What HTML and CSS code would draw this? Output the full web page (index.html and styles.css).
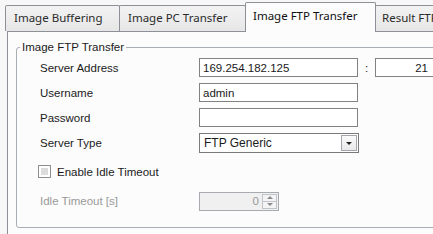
FILE: index.html
```html
<!DOCTYPE html>
<html lang="en">
<head>
  <meta charset="UTF-8">
  <title>Image FTP Transfer</title>
  <link rel="stylesheet" href="styles.css">
</head>
<body>
  <div class="window">
    <div class="tabs">
      <div class="tab tab-buffering">Image Buffering</div>
      <div class="tab tab-pc">Image PC Transfer</div>
      <div class="tab tab-ftp active">Image FTP Transfer</div>
      <div class="tab tab-result">Result FTP</div>
    </div>
    <div class="page">
      <fieldset class="group">
        <legend>Image FTP Transfer</legend>
        <!-- Server -->
        <div class="row">
          <span class="label">Server Address</span>
          <div class="field">169.254.182.125</div>
          <span class="colon">:</span>
          <div class="field port">21</div>
        </div>
        <div class="row">
          <span class="label">Username</span>
          <div class="field">admin</div>
        </div>
        <div class="row">
          <span class="label">Password</span>
          <div class="field"></div>
        </div>
        <div class="row">
          <span class="label">Server Type</span>
          <div class="select">
            <span class="select-text">FTP Generic</span>
            <span class="drop-btn"><span class="arrow-down"></span></span>
          </div>
        </div>
        <!-- Idle timeout -->
        <div class="row check-row">
          <span class="checkbox"></span>
          <span class="check-label">Enable Idle Timeout</span>
        </div>
        <div class="row spin-row">
          <span class="label disabled">Idle Timeout [s]</span>
          <div class="spin">
            <span class="spin-value">0</span>
            <span class="spin-btns">
              <span class="spin-btn"><span class="arrow-up"></span></span>
              <span class="spin-btn"><span class="arrow-down small"></span></span>
            </span>
          </div>
        </div>
      </fieldset>
    </div>
  </div>
</body>
</html>
```

FILE: styles.css
```css
/* General */
body {
  margin: 0;
  background: #f7f7f7;
  overflow: hidden;
  font-family: 'Liberation Sans', Arial, sans-serif;
  font-size: 11.5px;
  color: #1b1b1b;
}

.window {
  width: 470px;
  height: 234px;
}

/* Tabs */
.tabs {
  display: flex;
  align-items: flex-end;
  height: 31px;
  padding-left: 5px;
}

.tab {
  box-sizing: border-box;
  flex-shrink: 0;
  height: 26px;
  border: 1px solid #8d9096;
  border-bottom: none;
  border-radius: 2px 2px 0 0;
  margin-right: -1px;
  padding: 4px 0 0 8px;
  background: linear-gradient(#f3f3f3, #e6e6e6);
  font-family: 'Noto Sans', 'Open Sans', sans-serif;
  font-size: 11.5px;
  color: #2b2b2b;
  white-space: nowrap;
  overflow: hidden;
}

.tab-buffering { width: 115px; }
.tab-pc { width: 127px; }
.tab-ftp { width: 131px; }

.tab-result {
  width: 80px;
  padding-left: 6px;
}

.tab.active {
  position: relative;
  z-index: 1;
  height: 30px;
  margin-bottom: -1px;
  padding-top: 5px;
  padding-left: 7px;
  background: #fcfcfc;
  color: #111;
}

/* Page */
.page {
  margin-left: 7px;
  height: 203px;
  border-top: 1px solid #8d9096;
  border-left: 1px solid #8d9096;
  background: #fcfcfc;
  padding-top: 8px;
}

.group {
  box-sizing: border-box;
  width: 440px;
  height: 188px;
  margin: 0 0 0 8px;
  padding: 1px 0 0 23px;
  border: 1px solid #a9adb4;
  border-radius: 3px;
  min-width: 0;
}

.group legend {
  margin-left: -20px;
  padding: 0 2px;
  line-height: 14px;
  font-size: 11.5px;
}

.row {
  display: flex;
  align-items: center;
  height: 25px;
}

.label {
  width: 159px;
  flex-shrink: 0;
}

.label.disabled {
  color: #9a9a9a;
}

.field {
  box-sizing: border-box;
  width: 159px;
  height: 19px;
  padding: 2px 0 0 3px;
  border: 1px solid #828282;
  background: #fff;
  line-height: 14px;
}

.colon {
  width: 17px;
  text-align: center;
}

.field.port {
  width: 64px;
  padding: 2px 10px 0 0;
  text-align: right;
}

/* Select */
.select {
  box-sizing: border-box;
  display: flex;
  align-items: center;
  justify-content: space-between;
  width: 160px;
  height: 20px;
  padding: 0 1px 0 4px;
  border: 1px solid #7a7a7a;
  background: #fff;
  font-size: 12px;
}

.drop-btn {
  box-sizing: border-box;
  display: flex;
  align-items: center;
  justify-content: center;
  width: 16px;
  height: 16px;
  border: 1px solid #a3a6ab;
  background: linear-gradient(#fafafa, #e9e9e9);
}

.arrow-down {
  width: 0;
  height: 0;
  margin-top: 2px;
  border-left: 3px solid transparent;
  border-right: 3px solid transparent;
  border-top: 3px solid #222;
}

.arrow-up {
  width: 0;
  height: 0;
  border-left: 3px solid transparent;
  border-right: 3px solid transparent;
  border-bottom: 3px solid #8a8a8a;
}

.arrow-down.small {
  margin-top: 0;
  border-top-color: #8a8a8a;
}

/* Checkbox */
.check-row {
  height: 33px;
}

.checkbox {
  box-sizing: border-box;
  width: 13px;
  height: 13px;
  margin-left: -2px;
  border: 1px solid #8f8f8f;
  background: #fff;
  box-shadow: inset 0 0 0 2px #fff, inset 0 0 0 6px #dcdcdc;
}

.check-label {
  margin-left: 6px;
}

/* Spin */
.spin-row {
  height: 26px;
}

.spin {
  box-sizing: border-box;
  display: flex;
  align-items: center;
  width: 80px;
  height: 19px;
  padding: 1px;
  border: 1px solid #a7abb0;
  background: #f0f0f0;
}

.spin-value {
  flex: 1;
  text-align: right;
  padding-right: 3px;
  color: #9a9a9a;
}

.spin-btns {
  display: flex;
  flex-direction: column;
  width: 15px;
  height: 15px;
}

.spin-btn {
  box-sizing: border-box;
  display: flex;
  align-items: center;
  justify-content: center;
  height: 8px;
  border: 1px solid #c1c4c8;
  background: #f4f4f4;
}

.spin-btn + .spin-btn {
  height: 7px;
  border-top: none;
}
```
